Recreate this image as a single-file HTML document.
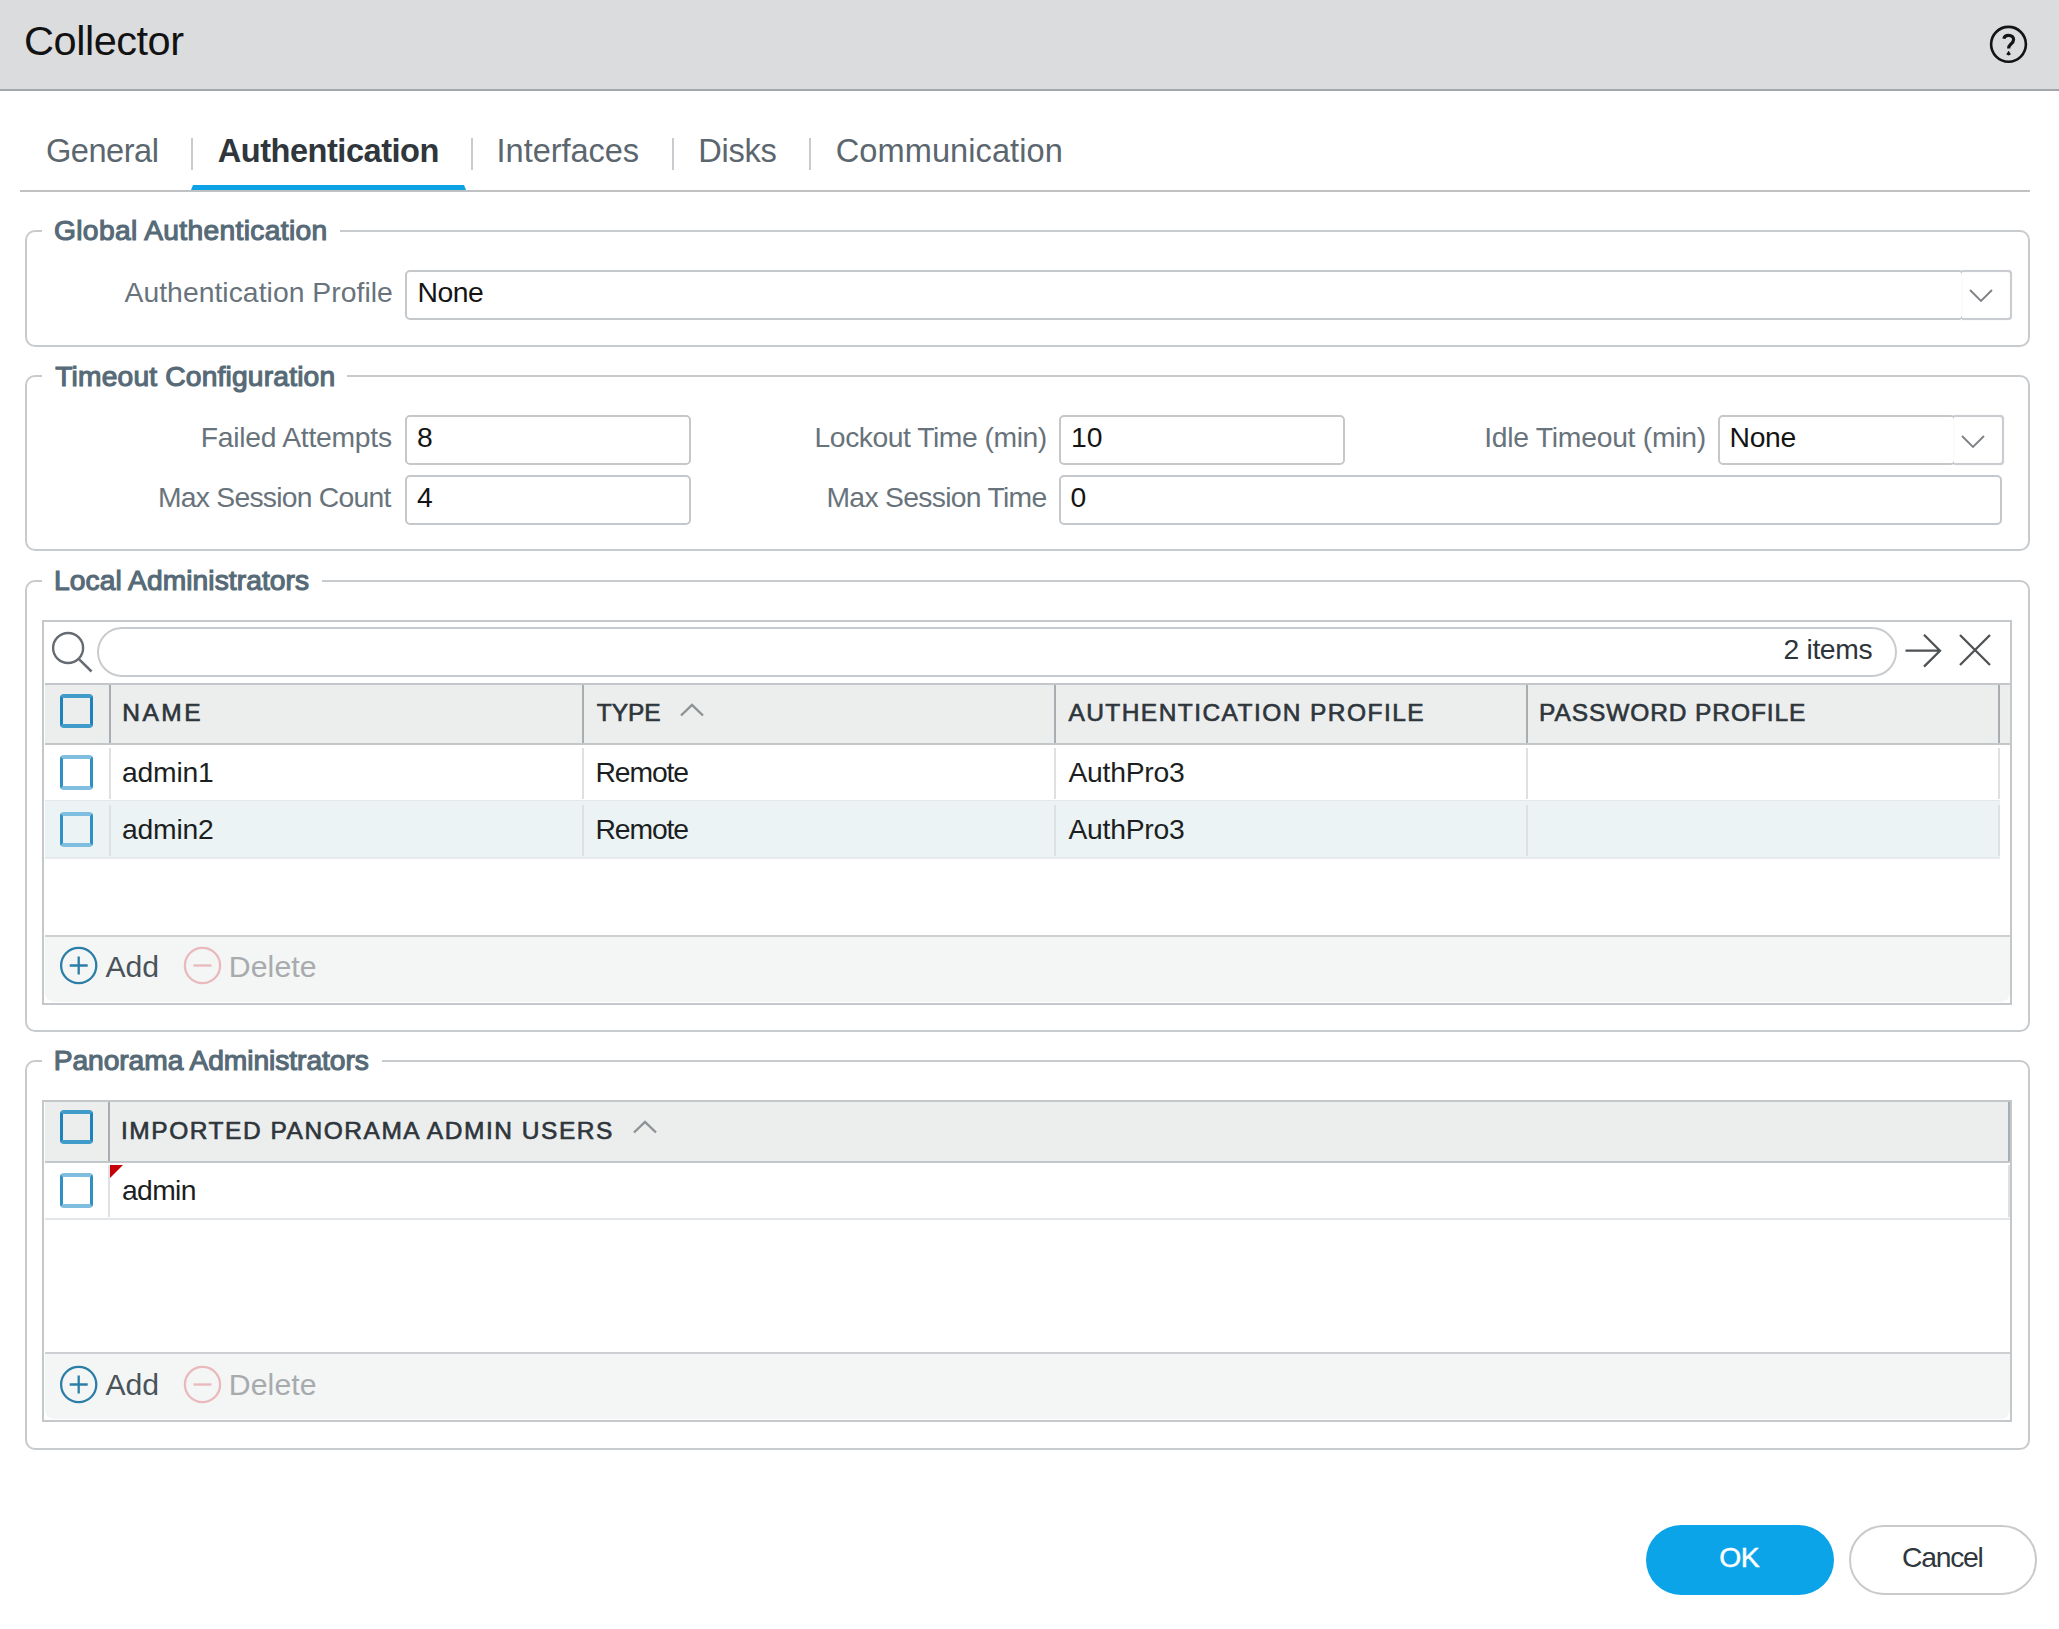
<!DOCTYPE html>
<html><head><meta charset="utf-8"><title>Collector</title>
<style>
html,body{margin:0;padding:0;background:#fff;width:2059px;height:1629px;overflow:hidden;position:relative;font-family:"Liberation Sans",sans-serif;}
.a{position:absolute;}
.t{position:absolute;white-space:nowrap;font-family:"Liberation Sans",sans-serif;}
.fs{position:absolute;border:2px solid #c7cbce;border-radius:10px;box-sizing:border-box;}
.lg{position:absolute;background:#fff;height:6px;}
.inp{position:absolute;border:2px solid #c5c8cb;border-radius:5px;box-sizing:border-box;background:#fff;}
.dd{position:absolute;box-sizing:border-box;border:2px solid #c9ccd0;border-left:none;border-radius:0 4px 4px 0;background:#fff;box-shadow:0 0 1px rgba(0,0,0,0.18), inset 0 0 1px rgba(0,0,0,0.12);}
.grid{position:absolute;border:2px solid #c5c8cb;box-sizing:border-box;background:#fff;}
.hdr{position:absolute;background:#eceeee;box-sizing:border-box;}
.hl{position:absolute;background:#c3c7ca;height:2px;}
.cs{position:absolute;background:#a8adb1;width:2px;}
.rs{position:absolute;background:#dde1e3;width:2px;}
.cb{position:absolute;box-sizing:border-box;border-style:solid;border-width:4px 3px;border-color:#3f9bca #1f83bb;border-radius:4px;background:transparent;}
.cbl{border-color:#80bedf #2f90c5;}
.foot{position:absolute;background:#f4f6f6;}
</style></head><body>
<div class="a" style="left:0;top:0;width:2059px;height:89px;background:#dbdcde;"></div>
<div class="a" style="left:0;top:89px;width:2059px;height:2px;background:#a3a7aa;"></div>
<div class="t" style="left:24.10px;top:20.00px;font-size:41.5px;line-height:41.5px;font-weight:400;color:#121212;letter-spacing:-0.475px;">Collector</div>
<svg class="a" style="left:1988px;top:24px;" width="42" height="42" viewBox="0 0 42 42">
  <circle cx="20.5" cy="20.3" r="17.4" fill="none" stroke="#141414" stroke-width="2.6"/>
  <path d="M15.9 14.8 C16.2 12.3 18.1 11.3 20.7 11.3 C23.6 11.3 25.6 13.1 25.6 15.6 C25.6 18.2 23.8 19.4 22.3 20.7 C21.1 21.7 20.7 22.7 20.7 24.6" fill="none" stroke="#141414" stroke-width="3.2"/><path d="M20.6 26.8 L22.9 30.3 Q20.6 32.6 18.3 30.3 Z" fill="#141414"/>
</svg>
<div class="t" style="left:46.00px;top:135.00px;font-size:32.6px;line-height:32.6px;font-weight:400;color:#5b666e;letter-spacing:-0.500px;">General</div>
<div class="t" style="left:217.70px;top:135.00px;font-size:32.6px;line-height:32.6px;font-weight:700;color:#2f373d;letter-spacing:-0.485px;">Authentication</div>
<div class="t" style="left:496.60px;top:135.00px;font-size:32.6px;line-height:32.6px;font-weight:400;color:#5b666e;letter-spacing:-0.056px;">Interfaces</div>
<div class="t" style="left:698.30px;top:135.00px;font-size:32.6px;line-height:32.6px;font-weight:400;color:#5b666e;letter-spacing:-0.300px;">Disks</div>
<div class="t" style="left:835.70px;top:135.00px;font-size:32.6px;line-height:32.6px;font-weight:400;color:#5b666e;letter-spacing:0.067px;">Communication</div>
<div class="a" style="left:191px;top:138px;width:2px;height:32px;background:#c8ccd0;"></div>
<div class="a" style="left:471px;top:138px;width:2px;height:32px;background:#c8ccd0;"></div>
<div class="a" style="left:672px;top:138px;width:2px;height:32px;background:#c8ccd0;"></div>
<div class="a" style="left:809px;top:138px;width:2px;height:32px;background:#c8ccd0;"></div>
<div class="a" style="left:191px;top:185px;width:275px;height:5px;background:#0ba2e6;clip-path:polygon(2px 0,273px 0,275px 5px,0 5px);"></div>
<div class="a" style="left:20px;top:190px;width:2010px;height:2px;background:#bfc1c3;"></div>
<div class="fs" style="left:25px;top:230px;width:2005px;height:117px;"></div>
<div class="lg" style="left:42px;top:228px;width:297.6px;"></div>
<div class="t" style="left:54.00px;top:216.00px;font-size:28.2px;line-height:28.2px;font-weight:400;color:#566a77;letter-spacing:0.340px;-webkit-text-stroke:1.15px #566a77;">Global Authentication</div>
<div class="fs" style="left:25px;top:375px;width:2005px;height:176px;"></div>
<div class="lg" style="left:42px;top:373px;width:305.0px;"></div>
<div class="t" style="left:55.20px;top:362.00px;font-size:28.2px;line-height:28.2px;font-weight:400;color:#566a77;letter-spacing:0.185px;-webkit-text-stroke:1.15px #566a77;">Timeout Configuration</div>
<div class="fs" style="left:25px;top:580px;width:2005px;height:452px;"></div>
<div class="lg" style="left:42px;top:578px;width:279.5px;"></div>
<div class="t" style="left:54.00px;top:566.00px;font-size:28.2px;line-height:28.2px;font-weight:400;color:#566a77;letter-spacing:0.068px;-webkit-text-stroke:1.15px #566a77;">Local Administrators</div>
<div class="fs" style="left:25px;top:1060px;width:2005px;height:389.5px;"></div>
<div class="lg" style="left:42px;top:1058px;width:339.6px;"></div>
<div class="t" style="left:53.70px;top:1046.00px;font-size:28.2px;line-height:28.2px;font-weight:400;color:#566a77;letter-spacing:-0.059px;-webkit-text-stroke:1.15px #566a77;">Panorama Administrators</div>
<div class="t" style="left:124.50px;top:278.00px;font-size:28.3px;line-height:28.3px;font-weight:400;color:#68737b;letter-spacing:0.043px;">Authentication Profile</div>
<div class="inp" style="left:405px;top:270px;width:1559px;height:50px;"></div>
<div class="dd" style="left:1962px;top:270px;width:50px;height:50px;"></div>
<svg class="a" style="left:1968px;top:288px;" width="26" height="16" viewBox="0 0 26 16"><path d="M2 2 L13 13 L24 2" fill="none" stroke="#7f8387" stroke-width="1.9"/></svg>
<div class="t" style="left:417.50px;top:278.00px;font-size:28.3px;line-height:28.3px;font-weight:400;color:#141414;letter-spacing:-0.500px;">None</div>
<div class="t" style="left:200.80px;top:423.00px;font-size:28.3px;line-height:28.3px;font-weight:400;color:#68737b;letter-spacing:-0.271px;">Failed Attempts</div>
<div class="inp" style="left:405px;top:415px;width:286px;height:50px;"></div>
<div class="t" style="left:417.10px;top:423.00px;font-size:28.3px;line-height:28.3px;font-weight:400;color:#141414;letter-spacing:0.000px;">8</div>
<div class="t" style="left:814.60px;top:423.00px;font-size:28.3px;line-height:28.3px;font-weight:400;color:#68737b;letter-spacing:-0.471px;">Lockout Time (min)</div>
<div class="inp" style="left:1059px;top:415px;width:286px;height:50px;"></div>
<div class="t" style="left:1071.00px;top:423.00px;font-size:28.3px;line-height:28.3px;font-weight:400;color:#141414;letter-spacing:0.000px;">10</div>
<div class="t" style="left:1484.20px;top:423.00px;font-size:28.3px;line-height:28.3px;font-weight:400;color:#68737b;letter-spacing:-0.259px;">Idle Timeout (min)</div>
<div class="inp" style="left:1718px;top:415px;width:238px;height:50px;"></div>
<div class="dd" style="left:1954px;top:415px;width:50px;height:50px;"></div>
<svg class="a" style="left:1960px;top:433.5px;" width="26" height="16" viewBox="0 0 26 16"><path d="M2 2 L13 13 L24 2" fill="none" stroke="#7f8387" stroke-width="1.9"/></svg>
<div class="t" style="left:1729.60px;top:423.00px;font-size:28.3px;line-height:28.3px;font-weight:400;color:#141414;letter-spacing:-0.367px;">None</div>
<div class="t" style="left:158.00px;top:483.00px;font-size:28.3px;line-height:28.3px;font-weight:400;color:#68737b;letter-spacing:-0.750px;">Max Session Count</div>
<div class="inp" style="left:405px;top:475px;width:286px;height:50px;"></div>
<div class="t" style="left:417.00px;top:483.00px;font-size:28.3px;line-height:28.3px;font-weight:400;color:#141414;letter-spacing:0.000px;">4</div>
<div class="t" style="left:826.50px;top:483.00px;font-size:28.3px;line-height:28.3px;font-weight:400;color:#68737b;letter-spacing:-0.700px;">Max Session Time</div>
<div class="inp" style="left:1059px;top:475px;width:943px;height:50px;"></div>
<div class="t" style="left:1070.50px;top:483.00px;font-size:28.3px;line-height:28.3px;font-weight:400;color:#141414;letter-spacing:0.000px;">0</div>
<div class="grid" style="left:42px;top:620px;width:1970px;height:385px;"></div>
<svg class="a" style="left:48px;top:628px;" width="48" height="48" viewBox="0 0 48 48"><circle cx="20.1" cy="20" r="15" fill="none" stroke="#656b71" stroke-width="2.4"/><path d="M31.2 31.3 L43.5 43.5" stroke="#656b71" stroke-width="2.5"/></svg>
<div class="a" style="left:97px;top:627px;width:1800px;height:50px;box-sizing:border-box;border:2px solid #c9cccf;border-radius:25px;background:#fff;"></div>
<div class="t" style="left:1783.60px;top:635.00px;font-size:28.3px;line-height:28.3px;font-weight:400;color:#2d353b;letter-spacing:-0.367px;">2 items</div>
<svg class="a" style="left:1903px;top:632px;" width="42" height="38" viewBox="0 0 42 38"><path d="M2.5 18.7 H37 M21 2.8 L37 18.7 L21 34.6" fill="none" stroke="#4e5255" stroke-width="2.3"/></svg>
<svg class="a" style="left:1957px;top:632px;" width="36" height="36" viewBox="0 0 36 36"><path d="M3 3 L33 33 M33 3 L3 33" fill="none" stroke="#4e5255" stroke-width="2.3"/></svg>
<div class="hl" style="left:45px;top:683px;width:1965px;"></div>
<div class="hdr" style="left:45px;top:685px;width:1965px;height:58px;"></div>
<div class="hl" style="left:45px;top:743px;width:1965px;"></div>
<div class="cs" style="left:109px;top:685px;height:58px;"></div>
<div class="cs" style="left:582px;top:685px;height:58px;"></div>
<div class="cs" style="left:1054px;top:685px;height:58px;"></div>
<div class="cs" style="left:1526px;top:685px;height:58px;"></div>
<div class="cs" style="left:1998px;top:685px;height:58px;"></div>
<div class="cb" style="left:60px;top:694px;width:33px;height:34px;"></div>
<div class="t" style="left:122.30px;top:701.00px;font-size:24.5px;line-height:24.5px;font-weight:400;color:#2e363c;letter-spacing:2.467px;-webkit-text-stroke:0.65px #2e363c;">NAME</div>
<div class="t" style="left:596.70px;top:701.00px;font-size:24.5px;line-height:24.5px;font-weight:400;color:#2e363c;letter-spacing:0.000px;-webkit-text-stroke:0.65px #2e363c;">TYPE</div>
<svg class="a" style="left:679px;top:702px;" width="26" height="16" viewBox="0 0 26 16"><path d="M2 13.5 L13 3 L24 13.5" fill="none" stroke="#8d9297" stroke-width="2.4"/></svg>
<div class="t" style="left:1068.40px;top:701.00px;font-size:24.5px;line-height:24.5px;font-weight:400;color:#2e363c;letter-spacing:1.443px;-webkit-text-stroke:0.65px #2e363c;">AUTHENTICATION PROFILE</div>
<div class="t" style="left:1539.00px;top:701.00px;font-size:24.5px;line-height:24.5px;font-weight:400;color:#2e363c;letter-spacing:0.907px;-webkit-text-stroke:0.65px #2e363c;">PASSWORD PROFILE</div>
<div class="a" style="left:45px;top:800px;width:1955px;height:58px;background:#ecf3f5;border-top:1px solid #e4e8ea;box-sizing:border-box;"></div>
<div class="a" style="left:45px;top:857px;width:1955px;height:2px;background:#e6eaec;"></div>
<div class="rs" style="left:109px;top:748px;height:51px;"></div>
<div class="rs" style="left:582px;top:748px;height:51px;"></div>
<div class="rs" style="left:1054px;top:748px;height:51px;"></div>
<div class="rs" style="left:1526px;top:748px;height:51px;"></div>
<div class="rs" style="left:1998px;top:748px;height:51px;"></div>
<div class="rs" style="left:109px;top:805px;height:51px;"></div>
<div class="rs" style="left:582px;top:805px;height:51px;"></div>
<div class="rs" style="left:1054px;top:805px;height:51px;"></div>
<div class="rs" style="left:1526px;top:805px;height:51px;"></div>
<div class="rs" style="left:1998px;top:805px;height:51px;"></div>
<div class="cb cbl" style="left:60px;top:755px;width:33px;height:35px;"></div>
<div class="cb cbl" style="left:60px;top:812px;width:33px;height:35px;"></div>
<div class="t" style="left:122.00px;top:758.00px;font-size:28.3px;line-height:28.3px;font-weight:400;color:#1c1f22;letter-spacing:-0.200px;">admin1</div>
<div class="t" style="left:595.50px;top:758.00px;font-size:28.3px;line-height:28.3px;font-weight:400;color:#1c1f22;letter-spacing:-1.100px;">Remote</div>
<div class="t" style="left:1068.40px;top:758.00px;font-size:28.3px;line-height:28.3px;font-weight:400;color:#1c1f22;letter-spacing:-0.243px;">AuthPro3</div>
<div class="t" style="left:122.00px;top:815.00px;font-size:28.3px;line-height:28.3px;font-weight:400;color:#1c1f22;letter-spacing:-0.200px;">admin2</div>
<div class="t" style="left:595.50px;top:815.00px;font-size:28.3px;line-height:28.3px;font-weight:400;color:#1c1f22;letter-spacing:-1.100px;">Remote</div>
<div class="t" style="left:1068.40px;top:815.00px;font-size:28.3px;line-height:28.3px;font-weight:400;color:#1c1f22;letter-spacing:-0.243px;">AuthPro3</div>
<div class="hl" style="left:45px;top:935px;width:1965px;background:#cdd0d2;"></div>
<div class="foot" style="left:45px;top:937px;width:1965px;height:65px;border-radius:0 0 9px 9px;"></div>
<svg class="a" style="left:59px;top:946px;" width="40" height="40" viewBox="0 0 40 40"><circle cx="19.7" cy="19.5" r="17.6" fill="none" stroke="#2b7fa6" stroke-width="2.3"/><path d="M19.7 10.5 V28.5 M10.7 19.5 H28.7" stroke="#2b7fa6" stroke-width="2.3"/></svg>
<div class="t" style="left:105.50px;top:952.00px;font-size:30.2px;line-height:30.2px;font-weight:400;color:#49535a;letter-spacing:-0.100px;">Add</div>
<svg class="a" style="left:183px;top:946px;" width="40" height="40" viewBox="0 0 40 40"><circle cx="19.5" cy="19.5" r="17.6" fill="none" stroke="#e9b9bc" stroke-width="2.3"/><path d="M10.5 19.5 H28.5" stroke="#e9b9bc" stroke-width="2.3"/></svg>
<div class="t" style="left:228.80px;top:952.00px;font-size:30.2px;line-height:30.2px;font-weight:400;color:#a8abad;letter-spacing:0.100px;">Delete</div>
<div class="grid" style="left:42px;top:1100px;width:1970px;height:322px;"></div>
<div class="hdr" style="left:45px;top:1102px;width:1965px;height:59px;"></div>
<div class="hl" style="left:45px;top:1161px;width:1965px;"></div>
<div class="cs" style="left:108px;top:1102px;height:59px;"></div>
<div class="cs" style="left:2008px;top:1102px;height:59px;"></div>
<div class="cb" style="left:60px;top:1110px;width:33px;height:34px;"></div>
<div class="t" style="left:121.00px;top:1119.00px;font-size:24.5px;line-height:24.5px;font-weight:400;color:#2e363c;letter-spacing:1.539px;-webkit-text-stroke:0.65px #2e363c;">IMPORTED PANORAMA ADMIN USERS</div>
<svg class="a" style="left:632px;top:1119px;" width="26" height="16" viewBox="0 0 26 16"><path d="M2 13.5 L13 3 L24 13.5" fill="none" stroke="#8d9297" stroke-width="2.4"/></svg>
<div class="a" style="left:45px;top:1218px;width:1965px;height:2px;background:#e3e6e8;"></div>
<div class="rs" style="left:108px;top:1165px;height:52px;"></div>
<div class="rs" style="left:2008px;top:1165px;height:52px;"></div>
<div class="cb cbl" style="left:60px;top:1173px;width:33px;height:35px;"></div>
<svg class="a" style="left:110px;top:1165px;" width="14" height="14" viewBox="0 0 14 14"><path d="M0 0 H13 L0 13 Z" fill="#c60008"/></svg>
<div class="t" style="left:122.00px;top:1176.00px;font-size:28.3px;line-height:28.3px;font-weight:400;color:#1c1f22;letter-spacing:-0.650px;">admin</div>
<div class="hl" style="left:45px;top:1352px;width:1965px;background:#cdd0d2;"></div>
<div class="foot" style="left:45px;top:1354px;width:1965px;height:65px;border-radius:0 0 9px 9px;"></div>
<svg class="a" style="left:59px;top:1364.5px;" width="40" height="40" viewBox="0 0 40 40"><circle cx="19.7" cy="19.5" r="17.6" fill="none" stroke="#2b7fa6" stroke-width="2.3"/><path d="M19.7 10.5 V28.5 M10.7 19.5 H28.7" stroke="#2b7fa6" stroke-width="2.3"/></svg>
<div class="t" style="left:105.50px;top:1370.00px;font-size:30.2px;line-height:30.2px;font-weight:400;color:#49535a;letter-spacing:-0.100px;">Add</div>
<svg class="a" style="left:183px;top:1364.5px;" width="40" height="40" viewBox="0 0 40 40"><circle cx="19.5" cy="19.5" r="17.6" fill="none" stroke="#e9b9bc" stroke-width="2.3"/><path d="M10.5 19.5 H28.5" stroke="#e9b9bc" stroke-width="2.3"/></svg>
<div class="t" style="left:228.80px;top:1370.00px;font-size:30.2px;line-height:30.2px;font-weight:400;color:#a8abad;letter-spacing:0.100px;">Delete</div>
<div class="a" style="left:1646px;top:1525px;width:188px;height:70px;border-radius:35px;background:#0ca4e8;"></div>
<div class="t" style="left:1719.20px;top:1543.00px;font-size:28.3px;line-height:28.3px;font-weight:400;color:#ffffff;letter-spacing:-0.500px;-webkit-text-stroke:0.45px #ffffff;">OK</div>
<div class="a" style="left:1849px;top:1525px;width:188px;height:70px;box-sizing:border-box;border:2px solid #c8cacc;border-radius:35px;background:#fff;"></div>
<div class="t" style="left:1902.00px;top:1543.00px;font-size:28.3px;line-height:28.3px;font-weight:400;color:#30373d;letter-spacing:-1.240px;">Cancel</div>
</body></html>
